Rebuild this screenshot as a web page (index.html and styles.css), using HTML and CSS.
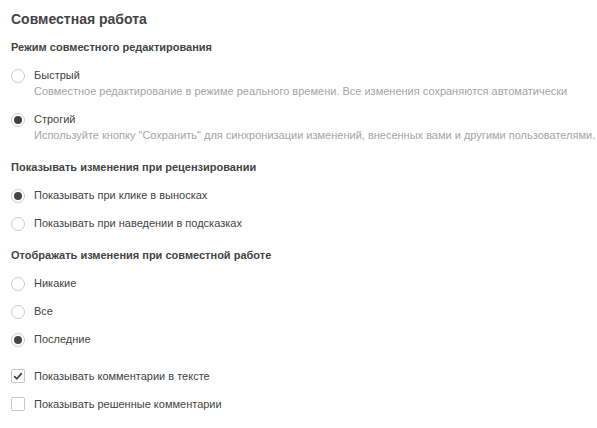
FILE: index.html
```html
<!DOCTYPE html>
<html lang="ru">
<head>
<meta charset="utf-8">
<title>Совместная работа</title>
<link rel="stylesheet" href="styles.css">
</head>
<body>
<div class="panel">
  <h1 class="panel-title">Совместная работа</h1>

  <h2 class="group-title">Режим совместного редактирования</h2>
  <div class="option">
    <span class="radio"></span>
    <div class="option-text">
      <div class="label">Быстрый</div>
      <div class="desc">Совместное редактирование в режиме реального времени. Все изменения сохраняются автоматически</div>
    </div>
  </div>
  <div class="option">
    <span class="radio checked"></span>
    <div class="option-text">
      <div class="label">Строгий</div>
      <div class="desc">Используйте кнопку "Сохранить" для синхронизации изменений, внесенных вами и другими пользователями.</div>
    </div>
  </div>

  <h2 class="group-title">Показывать изменения при рецензировании</h2>
  <div class="option">
    <span class="radio checked"></span>
    <div class="option-text"><div class="label">Показывать при клике в выносках</div></div>
  </div>
  <div class="option">
    <span class="radio"></span>
    <div class="option-text"><div class="label">Показывать при наведении в подсказках</div></div>
  </div>

  <h2 class="group-title">Отображать изменения при совместной работе</h2>
  <div class="option">
    <span class="radio"></span>
    <div class="option-text"><div class="label">Никакие</div></div>
  </div>
  <div class="option">
    <span class="radio"></span>
    <div class="option-text"><div class="label">Все</div></div>
  </div>
  <div class="option">
    <span class="radio checked"></span>
    <div class="option-text"><div class="label">Последние</div></div>
  </div>

  <div class="checks">
    <div class="option">
      <span class="checkbox checked">
        <svg viewBox="0 0 12 12" width="12" height="12"><path d="M2.2 6.2 L4.8 8.8 L9.8 3.2" fill="none" stroke="#444" stroke-width="1.8"/></svg>
      </span>
      <div class="option-text"><div class="label">Показывать комментарии в тексте</div></div>
    </div>
    <div class="option">
      <span class="checkbox"></span>
      <div class="option-text"><div class="label">Показывать решенные комментарии</div></div>
    </div>
  </div>
</div>
</body>
</html>
```

FILE: styles.css
```css
html, body {
  margin: 0;
  padding: 0;
  background: #ffffff;
}

body {
  font-family: "Liberation Sans", Arial, sans-serif;
  color: #444444;
}

.panel {
  padding: 8px 11px;
}

.panel-title {
  margin: 0;
  font-size: 14px;
  font-weight: bold;
  line-height: 22px;
  color: #444444;
}

.group-title {
  margin: 16px 0 0;
  font-size: 11px;
  font-weight: bold;
  line-height: 16px;
  color: #444444;
}

.panel-title + .group-title {
  margin-top: 9px;
}

.option {
  display: flex;
  align-items: flex-start;
  margin-top: 12px;
}

.radio {
  flex: none;
  box-sizing: border-box;
  width: 14px;
  height: 14px;
  margin-top: 2px;
  margin-right: 9px;
  border: 1px solid #cbcbcb;
  border-radius: 50%;
  display: flex;
  align-items: center;
  justify-content: center;
  background: #fff;
}

.radio.checked::after {
  content: "";
  width: 8px;
  height: 8px;
  border-radius: 50%;
  background: #444444;
}

.checkbox {
  flex: none;
  box-sizing: border-box;
  width: 14px;
  height: 14px;
  margin-top: 1px;
  margin-right: 9px;
  border: 1px solid #c8c8c8;
  border-radius: 2px;
  display: flex;
  align-items: center;
  justify-content: center;
  background: #fff;
}

.checkbox svg {
  display: block;
}

.label {
  font-size: 11px;
  line-height: 16px;
  color: #444444;
}

.desc {
  font-size: 11px;
  line-height: 16px;
  color: #a5a5a5;
  white-space: nowrap;
}

.checks {
  margin-top: 21px;
}

.checks .option:first-child {
  margin-top: 0;
}
```
